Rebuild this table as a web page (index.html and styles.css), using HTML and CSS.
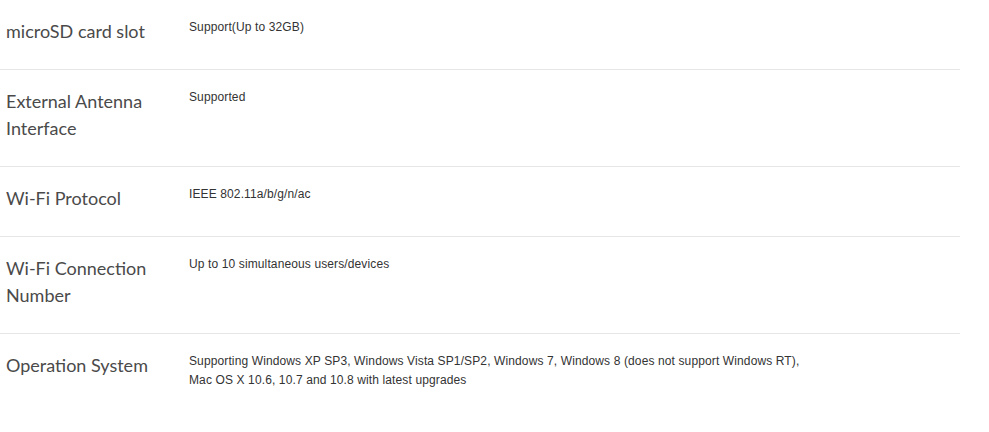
FILE: index.html
```html
<!DOCTYPE html>
<html>
<head>
<meta charset="utf-8">
<link rel="stylesheet" href="styles.css">
</head>
<body>
<div class="specs">
  <div class="row">
    <div class="label">microSD card slot</div>
    <div class="value">Support(Up to 32GB)</div>
  </div>
  <div class="row">
    <div class="label">External Antenna<br>Interface</div>
    <div class="value">Supported</div>
  </div>
  <div class="row">
    <div class="label">Wi-Fi Protocol</div>
    <div class="value">IEEE 802.11a/b/g/n/ac</div>
  </div>
  <div class="row">
    <div class="label">Wi-Fi Connection<br>Number</div>
    <div class="value">Up to 10 simultaneous users/devices</div>
  </div>
  <div class="row last">
    <div class="label">Operation System</div>
    <div class="value">Supporting Windows XP SP3, Windows Vista SP1/SP2, Windows 7, Windows 8 (does not support Windows RT),<br>Mac OS X 10.6, 10.7 and 10.8 with latest upgrades</div>
  </div>
</div>
</body>
</html>
```
FILE: styles.css
```css
html, body {
  margin: 0;
  padding: 0;
  background: #ffffff;
}
.specs {
  width: 960px;
}
.row {
  display: flex;
  padding: 18px 0 24px 6px;
  border-bottom: 1px solid #e6e6e6;
}
.row.last {
  border-bottom: none;
}
.label {
  width: 183px;
  flex: none;
  font-family: "Lato", "Open Sans", sans-serif;
  font-size: 18px;
  line-height: 27px;
  color: #4a4a4a;
}
.value {
  font-family: "Liberation Sans", Arial, sans-serif;
  font-size: 12px;
  letter-spacing: 0.12px;
  line-height: 19px;
  color: #333333;
}
```
